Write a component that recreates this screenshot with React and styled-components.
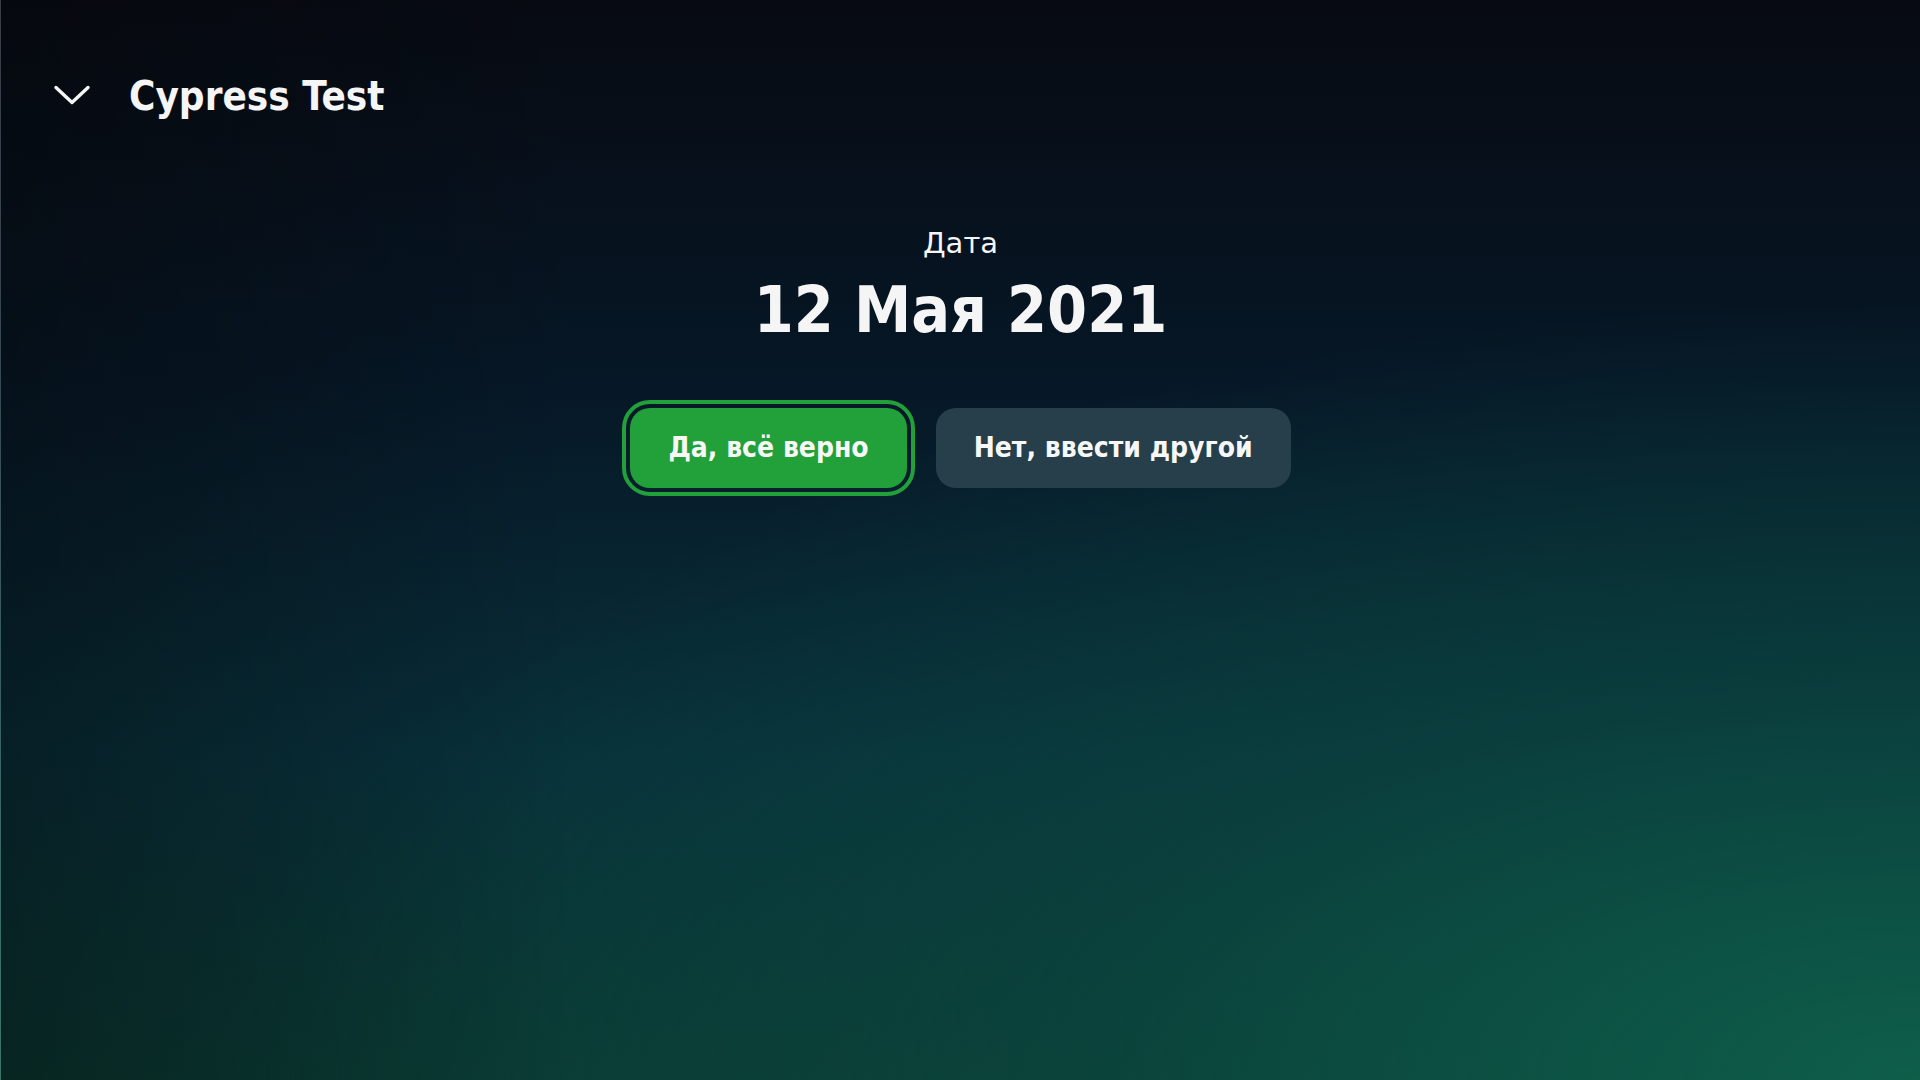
import React from "react";
import styled, { createGlobalStyle } from "styled-components";

const Global = createGlobalStyle`
  html, body { margin: 0; padding: 0; }
  body { background: #07090f; }
  * { box-sizing: border-box; }
`;

const Screen = styled.div`
  width: 1920px;
  height: 1080px;
  overflow: hidden;
  border-left: 1px solid rgba(150, 160, 170, 0.35);
  display: flex;
  flex-direction: column;
  font-family: "DejaVu Sans Condensed", "DejaVu Sans", sans-serif;
  color: #f5f5f5;
  background:
    linear-gradient(90deg, rgba(4, 6, 8, 0.4) 0%, rgba(4, 6, 8, 0) 30%),
    radial-gradient(ellipse 110% 90% at 100% 100%, rgba(14, 94, 74, 1) 0%, rgba(11, 72, 64, 0.6) 40%, rgba(8, 40, 50, 0) 80%),
    linear-gradient(180deg, #070a12 0%, #061726 35%, #08303a 70%, #0a3a32 100%);
`;

const Header = styled.header`
  display: flex;
  align-items: center;
  gap: 37px;
  padding: 76px 0 0 51px;
`;

const Toggle = styled.button`
  display: flex;
  align-items: center;
  justify-content: center;
  width: 40px;
  height: 24px;
  padding: 0;
  border: none;
  background: none;
  color: #f5f5f5;
`;

const Title = styled.h1`
  margin: 0;
  font-size: 40px;
  line-height: 1;
  font-weight: 700;
`;

const Content = styled.main`
  display: flex;
  flex-direction: column;
  align-items: center;
  padding-top: 113px;
`;

const Label = styled.div`
  font-family: "DejaVu Sans", sans-serif;
  font-size: 29px;
  line-height: 1;
  font-weight: 400;
`;

const DateValue = styled.div`
  margin-top: 20px;
  font-size: 64px;
  line-height: 1;
  font-weight: 700;
`;

const Actions = styled.div`
  display: flex;
  gap: 29px;
  margin-top: 66px;
`;

const ActionButton = styled.button`
  height: 80px;
  padding: 0 38px;
  border: none;
  border-radius: 20px;
  font-family: inherit;
  font-size: 28px;
  line-height: 1;
  font-weight: 700;
  color: #f7f7f7;
  background: ${(p) => (p.$primary ? "#22a03a" : "#263f4b")};
  outline: ${(p) => (p.$primary ? "4px solid #22a03a" : "none")};
  outline-offset: 4px;
`;

function Chevron() {
  return (
    <svg width="40" height="24" viewBox="0 0 40 24" fill="none">
      <path d="M4 3.5 L20 18.5 L36 3.5" stroke="currentColor" strokeWidth="3.4" strokeLinecap="round" strokeLinejoin="round" />
    </svg>
  );
}

export default function App() {
  return (
    <>
      <Global />
      <Screen>
        <Header>
          <Toggle aria-label="collapse">
            <Chevron />
          </Toggle>
          <Title>Cypress Test</Title>
        </Header>
        <Content>
          <Label>Дата</Label>
          <DateValue>12 Мая 2021</DateValue>
          <Actions>
            <ActionButton $primary>Да, всё верно</ActionButton>
            <ActionButton>Нет, ввести другой</ActionButton>
          </Actions>
        </Content>
      </Screen>
    </>
  );
}
